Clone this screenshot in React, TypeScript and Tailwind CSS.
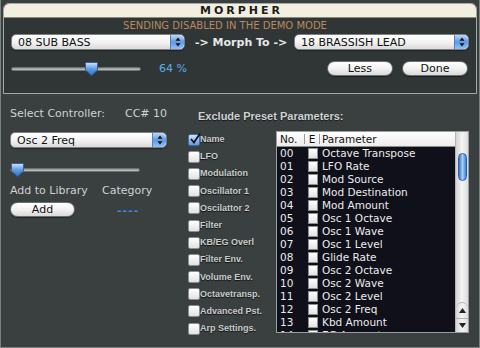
import React from "react";

const lucida = { fontFamily: '"DejaVu Sans", "Liberation Sans", sans-serif' };
const arial = { fontFamily: '"Liberation Sans", Arial, sans-serif' };

function Stepper() {
  return (
    <div className="flex h-full w-[14px] flex-col items-center justify-center rounded-r-[5px] border-l border-[#5b7fb0] bg-gradient-to-b from-[#bcd8f7] via-[#5b9ae6] to-[#8fc0f4]">
      <svg width="6" height="10" viewBox="0 0 6 10">
        <path d="M3 0.5 L5.5 3.8 L0.5 3.8 Z" fill="#111" />
        <path d="M3 9.5 L5.5 6.2 L0.5 6.2 Z" fill="#111" />
      </svg>
    </div>
  );
}

function Popup({ text, w }: { text: string; w: string }) {
  return (
    <div
      className={`flex h-[16px] ${w} items-center overflow-hidden rounded-[5px] border border-[#7d8080] bg-gradient-to-b from-[#ffffff] via-[#f3f3f3] to-[#dadada] shadow-[0_1px_1px_rgba(0,0,0,0.4)]`}
    >
      <span className="flex-1 pl-[6px] text-[11px] leading-none text-[#111]" style={lucida}>
        {text}
      </span>
      <Stepper />
    </div>
  );
}

function Slider({ pos }: { pos: number }) {
  return (
    <div className="relative h-[14px] w-[130px]">
      <div className="absolute left-0 right-0 top-[5px] h-[4px] rounded-full border border-[#6f7272] bg-gradient-to-b from-[#8e9090] to-[#c9c9c9]" />
      <svg
        className="absolute top-0"
        style={{ left: pos }}
        width="13"
        height="14"
        viewBox="0 0 13 14"
      >
        <defs>
          <linearGradient id={`th${pos}`} x1="0" y1="0" x2="0" y2="1">
            <stop offset="0" stopColor="#cfe4fb" />
            <stop offset="0.5" stopColor="#5b9be6" />
            <stop offset="1" stopColor="#2f6fd0" />
          </linearGradient>
        </defs>
        <path
          d="M1.5 0.5 H11.5 Q12.5 0.5 12.5 1.5 V8 L6.5 13.5 L0.5 8 V1.5 Q0.5 0.5 1.5 0.5 Z"
          fill={`url(#th${pos})`}
          stroke="#3a5f95"
        />
      </svg>
    </div>
  );
}

function AquaButton({ label, w }: { label: string; w: string }) {
  return (
    <div
      className={`flex h-[15px] ${w} items-center justify-center rounded-full border border-[#6d6f6f] bg-gradient-to-b from-[#ffffff] via-[#f2f2f2] to-[#d9d9d9] text-[11px] leading-none text-[#111] shadow-[0_1px_1px_rgba(0,0,0,0.4)]`}
      style={lucida}
    >
      {label}
    </div>
  );
}

function Check({ checked }: { checked?: boolean }) {
  return (
    <div
      className={`relative h-[12px] w-[12px] shrink-0 rounded-[2px] border ${
        checked
          ? "border-[#3f6aa8] bg-gradient-to-b from-[#cfe3fa] to-[#5d9ae4]"
          : "border-[#8d8f8f] bg-gradient-to-b from-[#ffffff] to-[#e2e2e2]"
      }`}
    >
      {checked && (
        <svg className="absolute -top-[2px] left-[0px]" width="12" height="12" viewBox="0 0 12 12">
          <path d="M2 6 L5 9.5 L11 0.5" fill="none" stroke="#111" strokeWidth="1.8" />
        </svg>
      )}
    </div>
  );
}

const groups = [
  "Name",
  "LFO",
  "Modulation",
  "Oscillator 1",
  "Oscilattor 2",
  "Filter",
  "KB/EG Overl",
  "Filter Env.",
  "Volume Env.",
  "Octavetransp.",
  "Advanced Pst.",
  "Arp Settings.",
];

const params = [
  "Octave Transpose",
  "LFO Rate",
  "Mod Source",
  "Mod Destination",
  "Mod Amount",
  "Osc 1 Octave",
  "Osc 1 Wave",
  "Osc 1 Level",
  "Glide Rate",
  "Osc 2 Octave",
  "Osc 2 Wave",
  "Osc 2 Level",
  "Osc 2 Freq",
  "Kbd Amount",
  "EG Amount",
];

export default function App() {
  return (
    <div className="h-[348px] w-[480px] overflow-hidden border-b border-l border-r border-[#7c8282] bg-[#3a3f3f]">
      {/* Top panel */}
      <div className="ml-[2px] mr-[2px] mt-[3px] h-[91px] overflow-hidden rounded-t-[6px] border border-[#a3a7a7] bg-[#303636]">
        <div className="flex h-[14px] items-center justify-center border-b border-[#8a8a80] bg-[#f3efe0]">
          <span
            className="pl-[3px] text-[11px] font-bold leading-none tracking-[3px] text-[#1c1c1c]"
            style={lucida}
          >
            MORPHER
          </span>
        </div>
        <div
          className="mt-[1px] pr-[30px] text-center text-[10px] leading-[13px] text-[#bb895c]"
          style={lucida}
        >
          SENDING DISABLED IN THE DEMO MODE
        </div>
        <div className="mt-[2px] flex items-center pl-[7px]">
          <Popup text="08 SUB BASS" w="w-[174px]" />
          <span
            className="ml-[10px] w-[99px] text-[11px] font-bold leading-none text-[#e8e8e8]"
            style={lucida}
          >
            -&gt; Morph To -&gt;
          </span>
          <Popup text="18 BRASSISH LEAD" w="w-[175px]" />
        </div>
        <div className="mt-[11px] flex items-center pl-[7px]">
          <Slider pos={74} />
          <span className="ml-[18px] text-[11px] leading-none text-[#5aaee8]" style={lucida}>
            64 %
          </span>
          <div className="ml-[140px] flex gap-[9px]">
            <AquaButton label="Less" w="w-[66px]" />
            <AquaButton label="Done" w="w-[66px]" />
          </div>
        </div>
      </div>

      {/* Lower section */}
      <div className="flex pl-[9px] pt-[13px]">
        {/* left column */}
        <div className="w-[178px] shrink-0">
          <div className="flex text-[11px] leading-[14px] text-[#cfd2d2]" style={lucida}>
            <span className="w-[115px]">Select Controller:</span>
            <span>CC# 10</span>
          </div>
          <div className="mt-[11px]">
            <Popup text="Osc 2 Freq" w="w-[157px]" />
          </div>
          <div className="mt-[15px]">
            <Slider pos={1} />
          </div>
          <div className="mt-[7px] flex text-[11px] leading-[14px] text-[#cfd2d2]" style={lucida}>
            <span className="w-[92px]">Add to Library</span>
            <span>Category</span>
          </div>
          <div className="mt-[4px] flex items-center">
            <AquaButton label="Add" w="w-[65px]" />
            <span
              className="ml-[42px] mt-[2px] text-[11px] font-bold leading-none tracking-[1px] text-[#3f88e0]"
              style={lucida}
            >
              ----
            </span>
          </div>
        </div>

        {/* right area */}
        <div className="flex-1">
          <div
            className="ml-[10px] mt-[2px] text-[11px] font-bold leading-[14px] text-[#cfd2d2] [text-shadow:0_1px_1px_rgba(0,0,0,0.6)]"
            style={arial}
          >
            Exclude Preset Parameters:
          </div>
          <div className="mt-[8px] flex">
            {/* checkbox list */}
            <div className="flex w-[88px] shrink-0 flex-col">
              {groups.map((g, i) => (
                <div key={g} className="flex h-[17.2px] items-center">
                  <Check checked={i === 0} />
                  <span
                    className="text-[9px] font-bold leading-none text-[#c9cccc] [text-shadow:0_1px_1px_rgba(0,0,0,0.7)]"
                    style={arial}
                  >
                    {g}
                  </span>
                </div>
              ))}
            </div>
            {/* table */}
            <div className="flex h-[202px] w-[193px] overflow-hidden border border-[#9a9e9e] bg-[#0f1019]">
              <div className="flex flex-1 flex-col">
                <div
                  className="flex h-[15px] shrink-0 items-center border-b border-[#8b8b8b] bg-gradient-to-b from-white to-[#ececec] text-[10.5px] leading-none text-[#111]"
                  style={lucida}
                >
                  <span className="w-[28px] border-r border-[#9b9b9b] pl-[3px]">No.</span>
                  <span className="w-[15px] border-r border-[#9b9b9b] text-center">E</span>
                  <span className="pl-[2px]">Parameter</span>
                </div>
                {params.map((p, i) => (
                  <div
                    key={p}
                    className="flex h-[13px] shrink-0 items-center text-[10.5px] leading-none text-[#ececec]"
                    style={lucida}
                  >
                    <span className="w-[28px] pl-[3px]">{String(i).padStart(2, "0")}</span>
                    <span className="flex w-[15px] justify-center">
                      <span className="h-[11px] w-[10px] border border-[#8d8f8f] bg-gradient-to-b from-white to-[#e3e3e3]" />
                    </span>
                    <span className="pl-[2px]">{p}</span>
                  </div>
                ))}
              </div>
              {/* scrollbar */}
              <div className="flex w-[13px] shrink-0 flex-col border-l border-[#b4b4b4] bg-gradient-to-r from-[#d4d4d4] via-[#f4f4f4] to-[#dcdcdc]">
                <div className="h-[21px]" />
                <div className="mx-auto h-[28px] w-[9px] rounded-full border border-[#2d5fa8] bg-gradient-to-r from-[#2f6fd0] via-[#a9cff7] to-[#3d7fdc]" />
                <div className="flex-1" />
                <div className="flex h-[16px] items-center justify-center rounded-t-[6px] border-t border-[#b0b0b0]">
                  <svg width="7" height="5" viewBox="0 0 7 5">
                    <path d="M3.5 0 L7 5 L0 5 Z" fill="#222" />
                  </svg>
                </div>
                <div className="flex h-[14px] items-center justify-center border-t border-[#b0b0b0]">
                  <svg width="7" height="5" viewBox="0 0 7 5">
                    <path d="M3.5 5 L7 0 L0 0 Z" fill="#222" />
                  </svg>
                </div>
              </div>
            </div>
          </div>
        </div>
      </div>
    </div>
  );
}
